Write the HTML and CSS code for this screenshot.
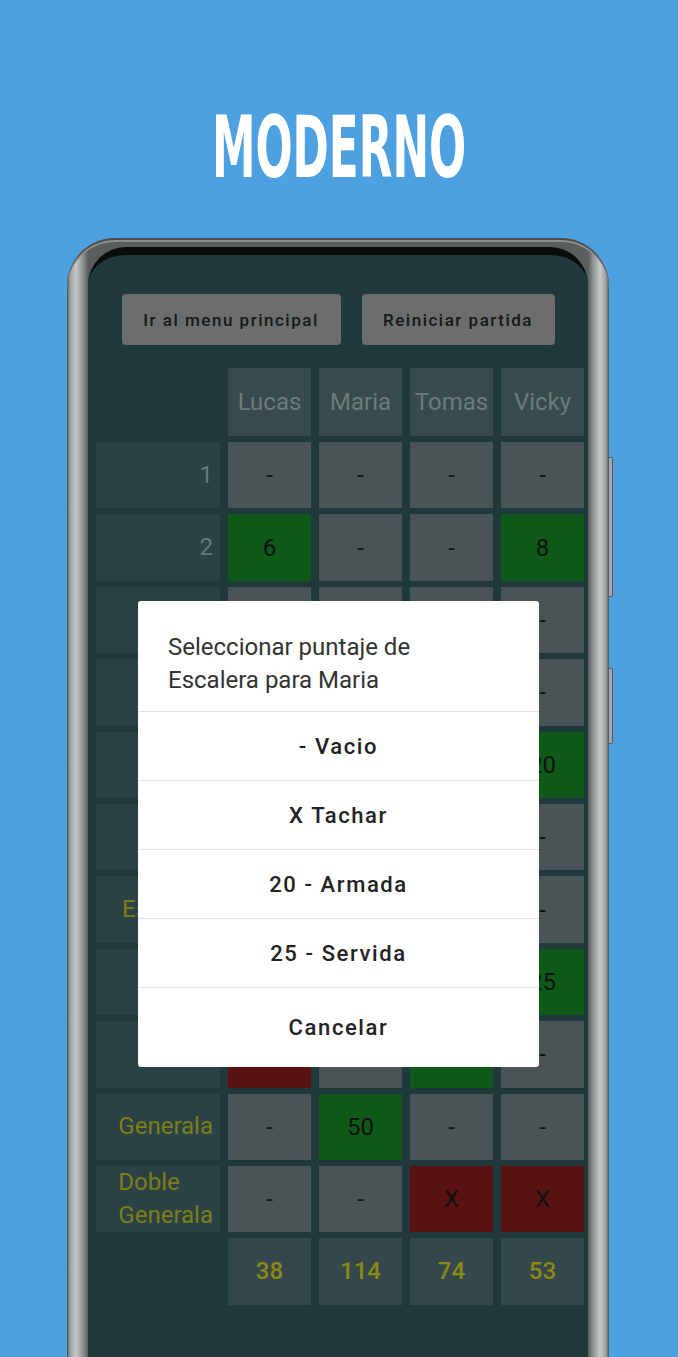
FILE: index.html
```html
<!DOCTYPE html>
<html lang="es">
<head>
    <meta charset="UTF-8">
    <meta name="viewport" content="width=device-width, initial-scale=1.0">
    <title>Generala - Moderno</title>
    <link rel="stylesheet" href="styles.css">
</head>
<body>
    <h1 class="title"><span>MODERNO</span></h1>

    <div class="phone">
        <span class="side-key key-volume"></span>
        <span class="side-key key-power"></span>

        <div class="screen">
            <div class="actions">
                <button class="btn btn-menu">Ir al menu principal</button>
                <button class="btn btn-reset">Reiniciar partida</button>
            </div>

            <div class="board">
                <div class="corner"></div>
                <div class="head">Lucas</div>
                <div class="head">Maria</div>
                <div class="head">Tomas</div>
                <div class="head">Vicky</div>

                <div class="label num"><span>1</span></div>
                <div class="cell">-</div>
                <div class="cell">-</div>
                <div class="cell">-</div>
                <div class="cell">-</div>

                <div class="label num"><span>2</span></div>
                <div class="cell ok">6</div>
                <div class="cell">-</div>
                <div class="cell">-</div>
                <div class="cell ok">8</div>

                <div class="label num"><span>3</span></div>
                <div class="cell">-</div>
                <div class="cell">-</div>
                <div class="cell">-</div>
                <div class="cell">-</div>

                <div class="label num"><span>4</span></div>
                <div class="cell ok">12</div>
                <div class="cell ok">8</div>
                <div class="cell ok">4</div>
                <div class="cell">-</div>

                <div class="label num"><span>5</span></div>
                <div class="cell">-</div>
                <div class="cell ok">20</div>
                <div class="cell">-</div>
                <div class="cell ok">20</div>

                <div class="label num"><span>6</span></div>
                <div class="cell">-</div>
                <div class="cell ok">6</div>
                <div class="cell">-</div>
                <div class="cell">-</div>

                <div class="label word"><span>Escalera</span></div>
                <div class="cell ok">20</div>
                <div class="cell">-</div>
                <div class="cell">-</div>
                <div class="cell">-</div>

                <div class="label word"><span>Full</span></div>
                <div class="cell">-</div>
                <div class="cell ok">30</div>
                <div class="cell ok">30</div>
                <div class="cell ok">25</div>

                <div class="label word"><span>Poker</span></div>
                <div class="cell crossed">X</div>
                <div class="cell">-</div>
                <div class="cell ok">40</div>
                <div class="cell">-</div>

                <div class="label word"><span>Generala</span></div>
                <div class="cell">-</div>
                <div class="cell ok">50</div>
                <div class="cell">-</div>
                <div class="cell">-</div>

                <div class="label word"><span>Doble Generala</span></div>
                <div class="cell">-</div>
                <div class="cell">-</div>
                <div class="cell crossed">X</div>
                <div class="cell crossed">X</div>

                <div class="corner"></div>
                <div class="total">38</div>
                <div class="total">114</div>
                <div class="total">74</div>
                <div class="total">53</div>
            </div>

            <div class="dialog">
                <div class="dialog-title">Seleccionar puntaje de Escalera para Maria</div>
                <div class="option">- Vacio</div>
                <div class="option">X Tachar</div>
                <div class="option">20 - Armada</div>
                <div class="option">25 - Servida</div>
                <div class="option cancel">Cancelar</div>
            </div>
        </div>
    </div>
</body>
</html>
```

FILE: styles.css
```css
body {
    margin: 0;
    width: 678px;
    height: 1357px;
    overflow: hidden;
    background: #4ea1e1;
    font-family: Roboto, "Noto Sans", sans-serif;
}
.title {
    margin: 0;
    padding-top: 105px;
    height: 84px;
    line-height: 84px;
    text-align: center;
    font-family: "Liberation Sans Narrow", "DejaVu Sans Condensed", sans-serif;
    font-size: 86px;
    font-weight: bold;
    color: #fff;
}
.title span {
    display: inline-block;
    transform: scaleX(0.565);
}

/* phone frame */
.phone {
    position: relative;
    width: 500px;
    height: 1130px;
    margin: 49px 0 0 67px;
    padding: 9px 21px 0;
    border-radius: 48px 48px 0 0;
    background: linear-gradient(90deg, #4c4e4e 0, #9da1a1 3px, #c6c9c9 9px, #8e9191 16px, #5b5e5e 21px,
        #5b5e5e 521px, #8e9191 526px, #c6c9c9 533px, #9da1a1 539px, #4c4e4e 542px);
    box-shadow: inset 0 2px 0 #4c4e4e, inset 0 4px 0 #8d8f8f;
}
.side-key {
    position: absolute;
    right: -4px;
    width: 3px;
    background: #a7a8ae;
    border: 1px solid #55565c;
    border-left: none;
    border-radius: 0 2px 2px 0;
}
.key-volume {
    top: 219px;
    height: 138px;
}
.key-power {
    top: 430px;
    height: 74px;
}

.screen {
    position: relative;
    height: 1130px;
    padding-top: 39px;
    border-top: 8px solid #0b0c0c;
    border-radius: 38px 38px 0 0;
    background: #1f393c;
    box-sizing: border-box;
}

/* top buttons */
.actions {
    display: flex;
    justify-content: center;
    gap: 21px;
}
.btn {
    height: 51px;
    padding: 0;
    border: none;
    border-radius: 4px;
    background: #6c6d6d;
    color: #161717;
    font-family: Roboto, sans-serif;
    font-size: 17px;
    font-weight: 500;
    letter-spacing: 1.5px;
}
.btn-menu {
    width: 219px;
}
.btn-reset {
    width: 193px;
}

/* score board */
.board {
    display: grid;
    grid-template-columns: 124px repeat(4, 83px);
    grid-template-rows: 68px;
    grid-auto-rows: 66.4px;
    gap: 6px 8px;
    margin: 23px 0 0 8px;
    font-size: 24px;
}
.head,
.cell,
.total {
    display: flex;
    align-items: center;
    justify-content: center;
}
.head {
    background: #394a4c;
    color: #6b7b7c;
}
.label {
    display: flex;
    align-items: center;
    justify-content: flex-end;
    padding-right: 7px;
    background: #2a4245;
    line-height: 33px;
}
.label span {
    width: min-content;
}
.label.num {
    color: #687879;
}
.label.word {
    color: #7e7e16;
}
.cell {
    background: #4a5355;
    color: #0e1212;
}
.cell.ok {
    background: #0f5a18;
}
.cell.crossed {
    background: #5a1111;
}
.total {
    background: #34484b;
    color: #8a8a15;
    font-weight: 500;
}

/* score picker */
.dialog {
    position: absolute;
    top: 346px;
    left: 50px;
    width: 401px;
    border-radius: 3px;
    background: #fff;
    overflow: hidden;
}
.dialog-title {
    padding: 30px 60px 14px 30px;
    font-size: 24px;
    line-height: 33px;
    color: #333;
}
.option {
    height: 68px;
    border-top: 1px solid #e3e3e3;
    display: flex;
    align-items: center;
    justify-content: center;
    font-size: 22px;
    font-weight: 500;
    letter-spacing: 1.6px;
    color: #222;
}
.option.cancel {
    height: 79px;
}
```
